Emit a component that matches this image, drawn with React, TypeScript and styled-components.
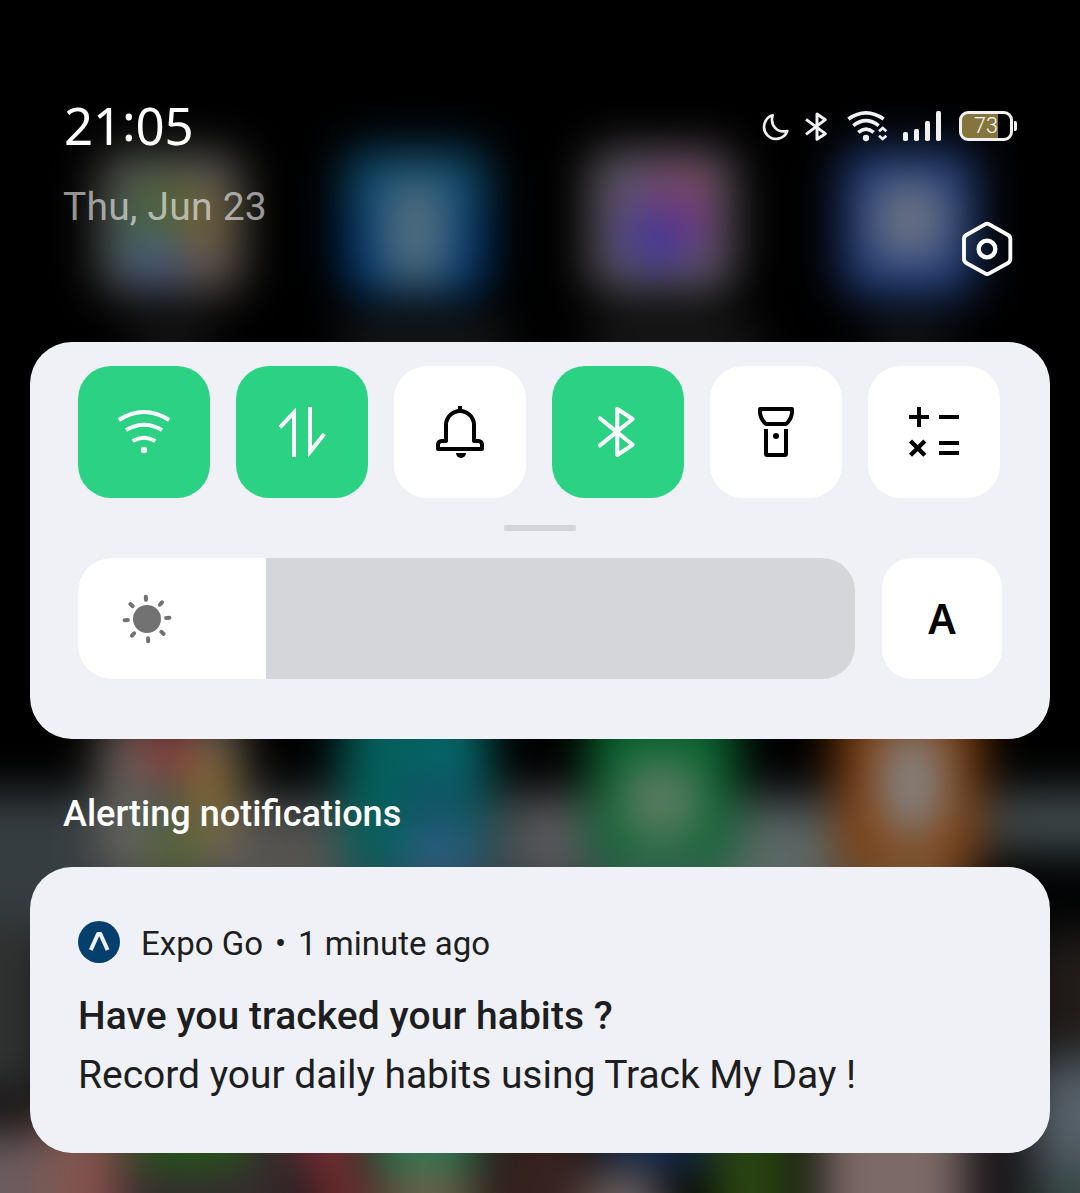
import React from "react";
import styled, { createGlobalStyle } from "styled-components";

const GlobalStyle = createGlobalStyle`
  *, *::before, *::after { box-sizing: border-box; }
  body { margin: 0; background: #000; }
`;

const Screen = styled.main`
  position: relative;
  width: 1080px;
  height: 1193px;
  overflow: hidden;
  background: #000;
  color: #fff;
  font-family: Roboto, "Noto Sans", sans-serif;
`;

const Backdrop = styled.svg`
  position: absolute;
  inset: 0;
`;

const Shade = styled.div`
  position: relative;
  display: flex;
  flex-direction: column;
  padding: 0 30px;
`;

const Header = styled.header`
  display: flex;
  justify-content: space-between;
  height: 342px;
  padding: 96px 32px 0 33px;
`;

const HeaderColumn = styled.div<{ $end?: boolean }>`
  display: flex;
  flex-direction: column;
  align-items: ${(p) => (p.$end ? "flex-end" : "flex-start")};
`;

const Clock = styled.time`
  display: flex;
  height: 58px;
  padding-left: 1px;
  font: 400 51px/58px "Noto Sans", sans-serif;
  letter-spacing: -0.2px;
`;

const Colon = styled.span`
  margin-top: -4px;
`;

const DateLabel = styled.div`
  margin-top: 29px;
  font-size: 39px;
  line-height: 48px;
  letter-spacing: 0.2px;
  color: rgba(255, 255, 255, 0.58);
`;

const StatusIcons = styled.div`
  display: flex;
  align-items: center;
  height: 32px;
  margin-top: 14px;
`;

const Glyph = styled.svg<{ $gap?: number }>`
  display: block;
  flex: none;
  margin-right: ${(p) => p.$gap ?? 0}px;
`;

const Battery = styled.div`
  display: flex;
  align-items: center;
  width: 60px;
  padding-left: 1px;
  gap: 1px;
`;

const BatteryShell = styled.div`
  display: flex;
  align-items: center;
  justify-content: center;
  width: 54px;
  height: 30px;
  border: 3px solid #f1f1f4;
  border-radius: 9px;
  background: linear-gradient(90deg, #85743c 36px, #000 36px);
  font-size: 21.5px;
  font-weight: 300;
  line-height: 22px;
  padding-bottom: 1px;
`;

const BatteryTip = styled.div`
  width: 3px;
  height: 10px;
  border-radius: 0 2px 2px 0;
  background: #f1f1f4;
`;

const SettingsButton = styled.button`
  margin: 78px 3px 0 0;
  padding: 0;
  border: 0;
  background: none;
  color: #fff;
`;

const Card = styled.section`
  border-radius: 42px;
  background: #f0f1f6;
`;

const QuickPanel = styled(Card)`
  display: flex;
  flex-direction: column;
  height: 397px;
  padding: 24px 48px 0;
`;

const TileRow = styled.div`
  display: flex;
  gap: 26px;
`;

const Tile = styled.button<{ $on?: boolean }>`
  display: grid;
  place-items: center;
  width: 132px;
  height: 132px;
  padding: 0;
  border: 0;
  border-radius: 33px;
  background: ${(p) => (p.$on ? "#2bd283" : "#fff")};
  color: ${(p) => (p.$on ? "#fff" : "#000")};
`;

const Handle = styled.div`
  align-self: center;
  width: 72px;
  height: 6px;
  margin: 27px 0;
  border-radius: 2px;
  background: #d4d5d9;
`;

const BrightnessRow = styled.div`
  display: flex;
  gap: 27px;
`;

const Slider = styled.div`
  width: 777px;
  height: 121px;
  overflow: hidden;
  border-radius: 33px;
  background: #d5d6da;
`;

const SliderFill = styled.div`
  display: flex;
  align-items: center;
  width: 188px;
  height: 100%;
  padding-left: 43px;
  background: #fff;
`;

const AutoButton = styled.button`
  width: 120px;
  height: 121px;
  padding: 0;
  border: 0;
  border-radius: 30px;
  background: #fff;
  color: #000;
  font: 600 41px/1 "Noto Sans", sans-serif;
`;

const SectionTitle = styled.h2`
  height: 128px;
  margin: 0;
  padding: 51px 33px 0;
  font-size: 36.1px;
  font-weight: 500;
  line-height: 48px;
`;

const Notification = styled(Card)`
  height: 286px;
  padding: 54px 48px 0;
  color: #1d1e21;
`;

const SourceRow = styled.div`
  display: flex;
  align-items: center;
  gap: 21px;
  height: 42px;
`;

const Source = styled.span`
  display: flex;
  gap: 12px;
  padding-top: 4px;
  font-size: 33px;
  line-height: 38px;
`;

const Title = styled.h3`
  margin: 29px 0 0;
  font-size: 39px;
  font-weight: 500;
  line-height: 48px;
  letter-spacing: 0.07px;
`;

const Body = styled.p`
  margin: 11px 0 0;
  font-size: 39px;
  line-height: 48px;
  letter-spacing: -0.03px;
`;

type Blob = [x: number, y: number, w: number, h: number, color: string];

const blobs: Blob[] = [
  [100, 153, 142, 140, "#5c5b59"],
  [120, 175, 60, 55, "#4b5f4c"],
  [145, 185, 40, 50, "#4c6428"],
  [185, 190, 40, 55, "#7a6232"],
  [120, 225, 50, 45, "#3a6c62"],
  [130, 245, 60, 34, "#42548a"],
  [185, 240, 40, 40, "#6a5448"],
  [345, 150, 142, 146, "#053e78"],
  [345, 150, 142, 62, "#0e4c72"],
  [385, 180, 62, 105, "#56707e"],
  [590, 150, 144, 142, "#605e60"],
  [615, 170, 96, 100, "#5f4a78"],
  [655, 165, 55, 50, "#804466"],
  [660, 200, 50, 50, "#743280"],
  [628, 215, 55, 52, "#3c34a0"],
  [842, 150, 134, 146, "#213f80"],
  [872, 180, 76, 80, "#6c7282"],
  [130, 325, 80, 40, "#1a1a1a"],
  [340, 325, 170, 40, "#1b1c1b"],
  [590, 325, 170, 40, "#1e1f1e"],
  [870, 325, 80, 40, "#181818"],
  [-80, 792, 1240, 150, "#363d40"],
  [960, 850, 220, 90, "#000102"],
  [1000, 795, 180, 55, "#444e50"],
  [510, 800, 80, 80, "#58585b"],
  [715, 812, 120, 100, "#5c6865"],
  [235, 815, 110, 100, "#555350"],
  [100, 715, 142, 160, "#6a6560"],
  [140, 715, 54, 68, "#843838"],
  [190, 750, 42, 85, "#86692c"],
  [140, 785, 50, 50, "#3c5650"],
  [150, 830, 50, 45, "#5b682f"],
  [342, 700, 146, 180, "#04605c"],
  [425, 720, 60, 60, "#056a6e"],
  [405, 770, 60, 60, "#105064"],
  [400, 825, 80, 60, "#2c5e80"],
  [590, 700, 146, 170, "#086430"],
  [622, 762, 78, 78, "#5e7c64"],
  [600, 860, 130, 50, "#3a6254"],
  [837, 700, 144, 180, "#803e0e"],
  [880, 730, 64, 105, "#848484"],
  [860, 860, 100, 50, "#74583a"],
  [-80, 920, 130, 180, "#2f3030"],
  [1030, 930, 130, 130, "#211c1a"],
  [1030, 1060, 130, 110, "#56616a"],
  [-80, 1130, 130, 160, "#6a5c60"],
  [40, 1110, 80, 160, "#80584f"],
  [85, 1160, 40, 100, "#8a4c4c"],
  [120, 1110, 180, 160, "#352b2d"],
  [130, 1100, 120, 68, "#245a1a"],
  [300, 1105, 55, 60, "#8c343c"],
  [315, 1160, 50, 100, "#7a3034"],
  [368, 1095, 112, 78, "#2c7852"],
  [375, 1170, 105, 100, "#6b5c48"],
  [490, 1110, 100, 160, "#36221e"],
  [605, 1095, 105, 70, "#142f58"],
  [585, 1172, 78, 90, "#736664"],
  [710, 1110, 85, 160, "#2a4412"],
  [820, 1100, 145, 180, "#7c6a66"],
  [965, 1110, 60, 160, "#181418"],
  [1030, 1165, 130, 100, "#384744"],
];

function Wallpaper() {
  return (
    <Backdrop width="1080" height="1193" viewBox="0 0 1080 1193" aria-hidden="true">
      <defs>
        <filter id="soft" filterUnits="userSpaceOnUse" x="-80" y="0" width="1240" height="1280" colorInterpolationFilters="sRGB">
          <feGaussianBlur stdDeviation="23" />
        </filter>
      </defs>
      <g filter="url(#soft)">
        {blobs.map(([x, y, width, height, fill], i) => (
          <rect key={i} x={x} y={y} width={width} height={height} rx={Math.min(width, height, 60) / 3} fill={fill} />
        ))}
      </g>
    </Backdrop>
  );
}

function TileIcon({ children }: { children: React.ReactNode }) {
  return (
    <svg width="60" height="60" viewBox="0 0 60 60" fill="none" stroke="currentColor" strokeWidth="4">
      {children}
    </svg>
  );
}

const tiles: { name: string; on?: boolean; icon: React.ReactNode }[] = [
  {
    name: "Wi-Fi",
    on: true,
    icon: (
      <>
        <path d="M4.8 18Q30 2 55.2 18M12 28.2Q30 17.4 48 28.2M18.7 39Q30 32.4 41.3 39" strokeWidth="3.9" />
        <circle cx="30" cy="48" r="3.2" fill="currentColor" stroke="none" />
      </>
    ),
  },
  { name: "Mobile data", on: true, icon: <path d="M8 25.3L22 10.5V55M38 5V50L52.2 32" /> },
  {
    name: "Mute",
    icon: (
      <>
        <path d="M30 9A14 14 0 0 0 16 23V39H11.5A3.5 3.5 0 0 0 8 42.5V47H52V42.5A3.5 3.5 0 0 0 48.5 39H44V23A14 14 0 0 0 30 9Z" strokeLinejoin="round" />
        <path d="M30 4V9" />
        <path d="M26 51H36A5 5 0 0 1 26 51Z" fill="currentColor" stroke="none" />
      </>
    ),
  },
  {
    name: "Bluetooth",
    on: true,
    icon: <path d="M12 16.4L44.6 42.8L29.3 53V6.8L44.6 17L12 43.4" strokeLinejoin="round" strokeLinecap="round" />,
  },
  {
    name: "Flashlight",
    icon: (
      <>
        <path d="M14 7H46V11Q45 18 40 22H20Q15 18 14 11Z" strokeLinejoin="round" />
        <path d="M20 27V52Q20 53 21 53H39Q40 53 40 52V27" />
        <circle cx="30" cy="34" r="3" fill="currentColor" stroke="none" />
      </>
    ),
  },
  {
    name: "Calculator",
    icon: (
      <>
        <path d="M5 15H25M15 5V25M35 15H55M35 41H55M35 51H55" />
        <path d="M6.5 39L20.8 53.3M20.8 39L6.5 53.3" strokeWidth="4.4" />
      </>
    ),
  },
];

const rays = [0, 45, 90, 135, 180, 225, 270, 315];

export default function App() {
  return (
    <Screen>
      <GlobalStyle />
      <Wallpaper />
      <Shade>
        <Header>
          <HeaderColumn>
            <Clock>
              21<Colon>:</Colon>05
            </Clock>
            <DateLabel>Thu, Jun 23</DateLabel>
          </HeaderColumn>
          <HeaderColumn $end>
            <StatusIcons>
              <Glyph $gap={14} width="28" height="32" viewBox="66 60 84 96" fill="none" stroke="#f1f1f4" strokeWidth="8" strokeLinejoin="round">
                <path d="M98 76A36 36 0 1 0 142 123C112 130 89 106 98 76Z" />
              </Glyph>
              <Glyph $gap={18} width="25" height="32" viewBox="192 60 75 96" fill="none" stroke="#f1f1f4" strokeWidth="9">
                <path d="M198 88L256 131L231 148V72L256 89L198 133" strokeLinejoin="round" />
              </Glyph>
              <Glyph $gap={14} width="41" height="32" viewBox="321 60 123 96" fill="none" stroke="#f1f1f4" strokeWidth="11">
                <path d="M325 87Q378 50 431 87M340 107Q378 77 416 107M355 127Q378 108 401 127" />
                <circle cx="378" cy="144" r="9.5" fill="#f1f1f4" stroke="none" />
                <path d="M417 124L428 114L439 124M417 137L428 147L439 137" strokeWidth="8" />
              </Glyph>
              <Glyph $gap={16} width="40" height="32" viewBox="486 60 120 96" fill="#f1f1f4">
                <rect x="489" y="126" width="15" height="27" rx="5" />
                <rect x="522" y="117" width="15" height="36" rx="5" />
                <rect x="555" y="93" width="15" height="60" rx="5" />
                <rect x="588" y="63" width="15" height="90" rx="5" />
              </Glyph>
              <Battery>
                <BatteryShell>73</BatteryShell>
                <BatteryTip />
              </Battery>
            </StatusIcons>
            <SettingsButton aria-label="Settings">
              <Glyph width="56" height="58" viewBox="657 390 168 174" fill="none" stroke="currentColor">
                <path d="M735 403Q741 399 748 403L804 435Q811 439 811 447V507Q811 515 804 519L748 550Q741 554 735 550L679 519Q672 515 672 507V447Q672 439 679 435Z" strokeWidth="11.5" />
                <circle cx="741" cy="477" r="25" strokeWidth="13" />
              </Glyph>
            </SettingsButton>
          </HeaderColumn>
        </Header>

        <QuickPanel>
          <TileRow>
            {tiles.map((tile) => (
              <Tile key={tile.name} $on={tile.on} aria-label={tile.name}>
                <TileIcon>{tile.icon}</TileIcon>
              </Tile>
            ))}
          </TileRow>
          <Handle />
          <BrightnessRow>
            <Slider>
              <SliderFill>
                <Glyph width="52" height="52" viewBox="-26 -26 52 52" stroke="#727272" strokeWidth="4" strokeLinecap="round">
                  <circle r="14" fill="#727272" stroke="none" />
                  {rays.map((angle) => (
                    <path key={angle} d="M0 -19.2V-22.4" transform={`rotate(${angle - 3})`} />
                  ))}
                </Glyph>
              </SliderFill>
            </Slider>
            <AutoButton>A</AutoButton>
          </BrightnessRow>
        </QuickPanel>

        <SectionTitle>Alerting notifications</SectionTitle>

        <Notification>
          <SourceRow>
            <Glyph width="42" height="42" viewBox="0 0 42 42">
              <circle cx="21" cy="21" r="21" fill="#053f6e" />
              <path d="M12.8 29L20 13H22.4L29.6 29" fill="none" stroke="#f0f1f6" strokeWidth="4" strokeLinejoin="round" />
            </Glyph>
            <Source>
              <span>Expo Go</span>
              <span>•</span>
              <span>1 minute ago</span>
            </Source>
          </SourceRow>
          <Title>Have you tracked your habits ?</Title>
          <Body>Record your daily habits using Track My Day !</Body>
        </Notification>
      </Shade>
    </Screen>
  );
}
